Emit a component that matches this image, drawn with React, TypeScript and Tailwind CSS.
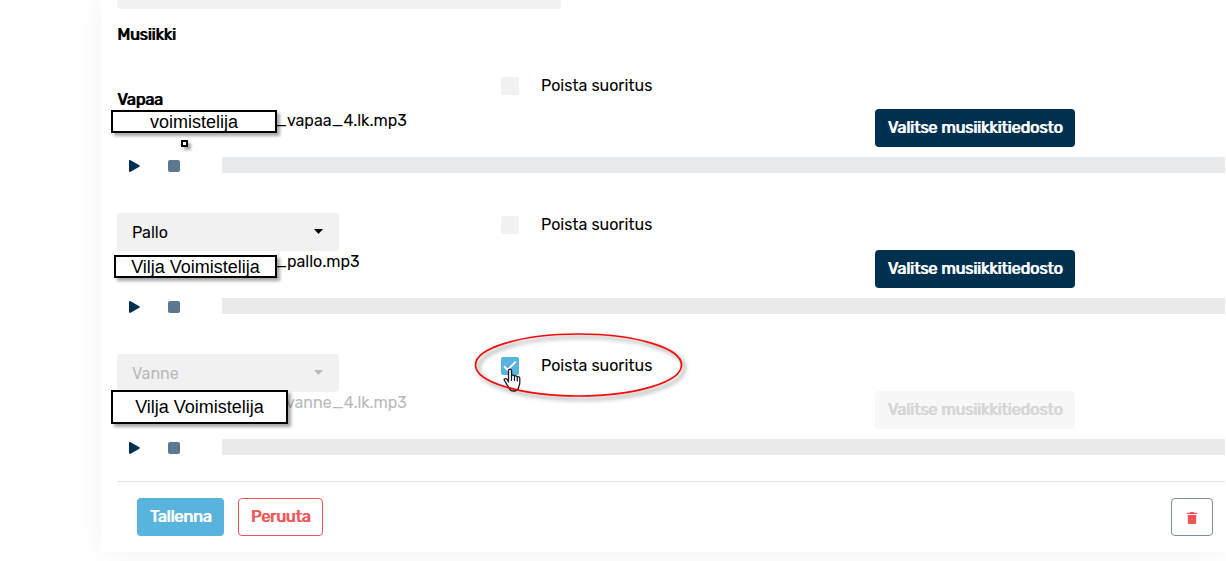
import { useState } from "react";

interface Routine {
    id: string;
    apparatus: string;
    fixed?: boolean;
    fileName: string;
    fileClass: string;
    mask: string;
    maskClass: string;
}

const ROUTINES: Routine[] = [
    {
        id: "vapaa",
        apparatus: "Vapaa",
        fixed: true,
        fileName: "_vapaa_4.lk.mp3",
        fileClass: "pl-[158px]",
        mask: "voimistelija",
        maskClass: "-left-1.5 top-[38px] h-[23px] w-[166px]",
    },
    {
        id: "pallo",
        apparatus: "Pallo",
        fileName: "_pallo.mp3",
        fileClass: "pl-[158px]",
        mask: "Vilja Voimistelija",
        maskClass: "-left-[3px] top-[42px] h-[23px] w-[163px]",
    },
    {
        id: "vanne",
        apparatus: "Vanne",
        fileName: "vanne_4.lk.mp3",
        fileClass: "pl-[169px]",
        mask: "Vilja Voimistelija",
        maskClass: "-left-1.5 top-9 h-[34px] w-[177px]",
    },
];

const APPARATUS = ["Pallo", "Vanne", "Nauha", "Keilat"];

const maskBase =
    "absolute z-10 flex items-center justify-center border-2 border-black bg-white shadow-[3px_3px_3px_rgba(0,0,0,0.35)]";

// Regular face thickened by a one pixel shadow
const strong = "[text-shadow:1px_0_0_currentColor]";

function Player() {
    return (
        <div className="mt-2.5 flex h-[18px] items-center">
            <button type="button" aria-label="Toista" className="ml-3 mr-7">
                <svg width="11" height="12" viewBox="0 0 11 12" className="block">
                    <path d="M0 1.2C0 .2.8-.2 1.6.2l8.7 5.1c.7.4.7 1 0 1.4l-8.7 5.1C.8 12.2 0 11.8 0 10.800Z" fill="#003050" />
                </svg>
            </button>
            <button type="button" aria-label="Pysäytä" className="mr-[42px] h-3 w-3 rounded-xs bg-[#5b788f]" />
            <div className="h-4 flex-1 self-start bg-[#e7ebee]" />
        </div>
    );
}

function HandCursor() {
    return (
        <svg width="18" height="24" viewBox="0 0 18 24" className="pointer-events-none absolute left-[2px] top-[14px]">
            <path
                d="M5.500 14V2.700C5.500.5 8.500.5 8.500 2.700V8c.3-1.200 2.700-1.200 3 .5.5-1.200 2.600-.9 2.800.7.700-1 2.500-.4 2.500 1.200V15c0 2-1.300 3.200-1.300 5-1 2.600-2.500 3-4.500 3-3 0-4.400-1-5-3-.5-1.800-2.300-3-3.300-5.500-.4-.9-1.600-2-1.600-2.900 0-1.300 2-1.400 2.900-.3Z"
                fill="#fff"
                stroke="#1b1b2b"
                strokeWidth="1.300"
                strokeLinejoin="round"
            />
            <path d="M8.500 8v4.500M11.500 9v3.500M14.300 9.500V13" stroke="#1b1b2b" strokeWidth="1.200" strokeLinecap="round" />
        </svg>
    );
}

function RoutineRow({ routine }: { routine: Routine }) {
    const [removed, setRemoved] = useState(routine.id === "vanne");
    const [apparatus, setApparatus] = useState(routine.apparatus);

    return (
        <section className="mb-[38px] last:mb-0">
            <div className="flex h-[75px]">
                {/* Väline ja tiedosto */}
                <div className="relative w-96 shrink-0">
                    {routine.fixed ? (
                        <div className="flex h-[38px] items-end">
                            <h3 className={`leading-5 ${strong}`}>{routine.apparatus}</h3>
                        </div>
                    ) : (
                        <div className="relative w-[222px]">
                            <select
                                aria-label="Väline"
                                value={apparatus}
                                disabled={removed}
                                onChange={(e) => setApparatus(e.target.value)}
                                className="block h-[38px] w-full appearance-none rounded bg-[#f1f1f1] px-[15px] pt-0.5 text-black disabled:text-[#b9b9b9] disabled:opacity-100"
                            >
                                {APPARATUS.map((name) => (
                                    <option key={name}>{name}</option>
                                ))}
                            </select>
                            <svg
                                width="9"
                                height="5"
                                viewBox="0 0 9 5"
                                className={`pointer-events-none absolute right-4 top-4 ${removed ? "text-[#b9b9b9]" : "text-black"}`}
                            >
                                <path d="M0 0h9L4.500 5Z" fill="currentColor" />
                            </svg>
                        </div>
                    )}
                    <p className={`leading-[22px] ${routine.fileClass} ${removed ? "text-[#b9b9b9]" : ""}`}>
                        {routine.fileName}
                    </p>
                    <div className={`${maskBase} ${routine.maskClass} font-['Liberation_Sans',Arial,sans-serif] text-lg leading-5`}>
                        {routine.mask}
                    </div>
                    {routine.fixed && <div className={`${maskBase} left-16 top-[68px] h-[7px] w-[7px]`} />}
                </div>

                {/* Suorituksen poisto */}
                <div className={`relative w-[374px] shrink-0 ${routine.fixed ? "pt-[5px]" : "pt-[3px]"}`}>
                    <label className="relative flex w-fit items-center gap-[22px] leading-[18px]">
                        <input
                            type="checkbox"
                            checked={removed}
                            onChange={(e) => setRemoved(e.target.checked)}
                            className="h-[18px] w-[18px] appearance-none rounded-xs bg-[#f1f1f1] checked:bg-[#58b4dc]"
                        />
                        {removed && (
                            <svg width="18" height="18" viewBox="0 0 18 18" className="pointer-events-none absolute left-0 top-0">
                                <path d="M3 9.300l3.700 3.500L14.700 4.600" fill="none" stroke="#fff" strokeWidth="1.900" />
                            </svg>
                        )}
                        Poista suoritus
                    </label>
                    {routine.id === "vanne" && (
                        <>
                            <HandCursor />
                            <svg
                                width="216"
                                height="72"
                                viewBox="0 0 216 72"
                                className="pointer-events-none absolute -left-7 -top-[22px] drop-shadow-[3px_3px_2px_rgba(0,0,0,0.5)]"
                            >
                                <ellipse cx="105.500" cy="33" rx="103" ry="31" fill="none" stroke="#f50a0a" strokeWidth="1.700" />
                            </svg>
                        </>
                    )}
                </div>

                <button
                    type="button"
                    disabled={removed}
                    className={`mt-[37px] h-[38px] w-[200px] rounded bg-[#003050] text-center text-white disabled:bg-[#f7f7f7] disabled:text-[#d5d5d5] ${strong}`}
                >
                    Valitse musiikkitiedosto
                </button>
            </div>
            <Player />
        </section>
    );
}

export default function App() {
    return (
        <div className="overflow-hidden bg-white pb-[9px] pl-[101px] font-[Rubik,Roboto,sans-serif] text-base text-black">
            <main className="bg-white pb-4 pl-4 pr-px shadow-[0_0_30px_rgba(0,0,0,0.06)]">
                <div className="h-[9px] w-[444px] rounded-b bg-[#f1f1f1]" />
                <h2 className={`mb-[25px] mt-3.5 leading-6 ${strong}`}>Musiikki</h2>

                <div>
                    {ROUTINES.map((routine) => (
                        <RoutineRow key={routine.id} routine={routine} />
                    ))}
                </div>

                <footer className="mt-6 flex items-center gap-3.5 border-t border-[#e3e5e6] pl-5 pr-3 pt-4">
                    <button type="button" className={`h-[38px] w-[87px] rounded bg-[#58b4dc] text-white ${strong}`}>
                        Tallenna
                    </button>
                    <button
                        type="button"
                        className={`h-[38px] w-[85px] rounded border border-[#ee5555] text-[#ee5555] ${strong}`}
                    >
                        Peruuta
                    </button>
                    <button
                        type="button"
                        aria-label="Poista"
                        className="ml-auto flex h-[38px] w-[42px] items-center justify-center rounded border border-[#7792a6]"
                    >
                        <svg width="10" height="12" viewBox="0 0 10 12" className="mt-0.5 text-[#ee5555]">
                            <path d="M0 .7h2.800L3.500 0h3l.7.7H10V2H0ZM.8 3h8.400v7.700c0 .7-.6 1.300-1.300 1.300H2.100C1.400 12 .8 11.400.8 10.700Z" fill="currentColor" />
                        </svg>
                    </button>
                </footer>
            </main>
        </div>
    );
}
